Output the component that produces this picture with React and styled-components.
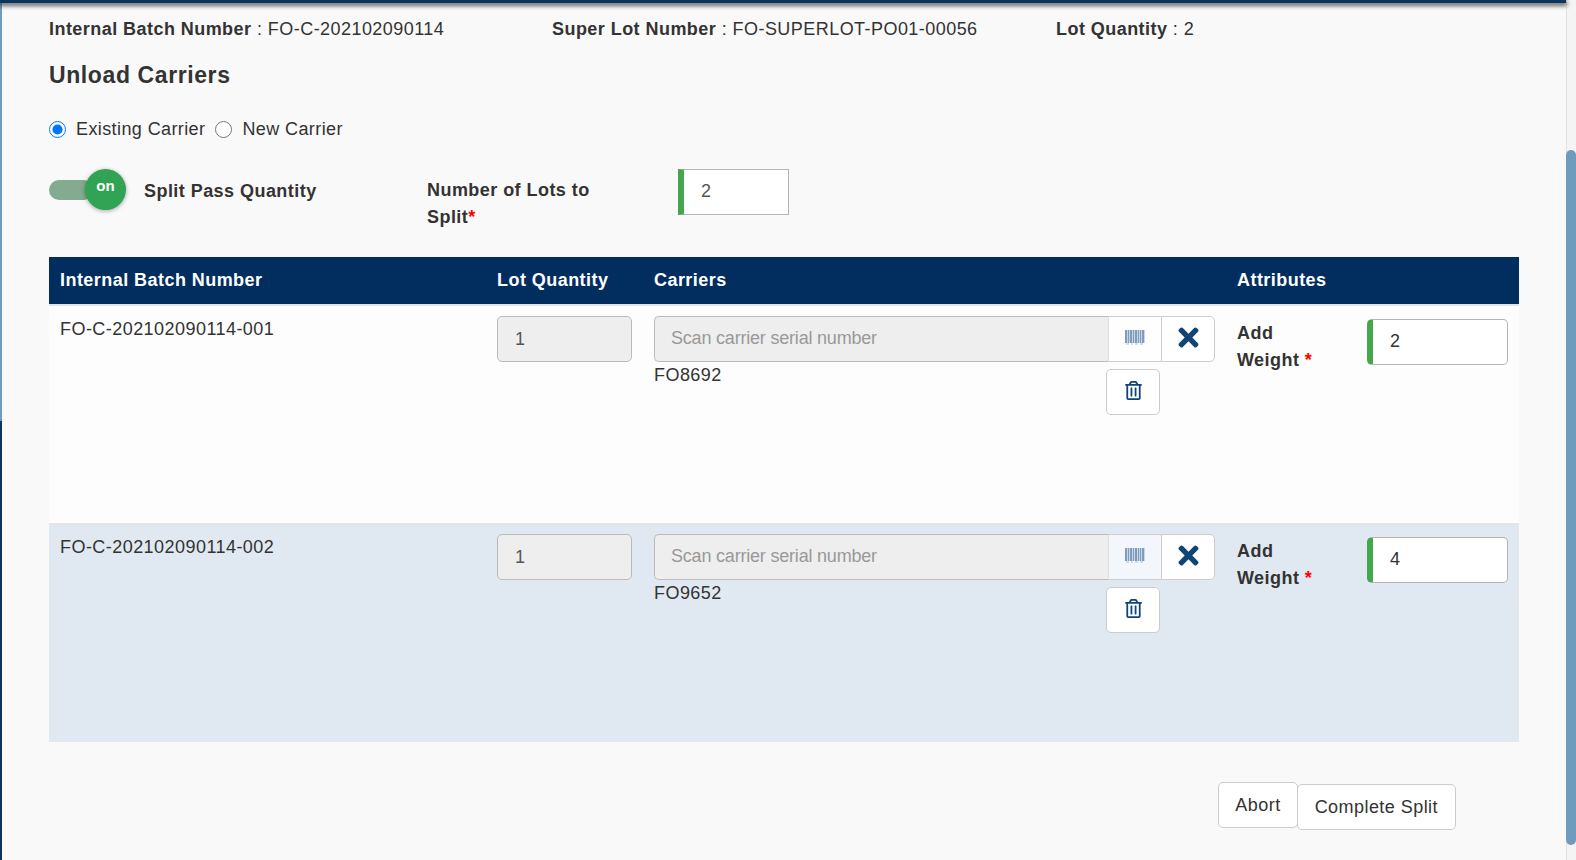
import React from 'react';
import styled, { createGlobalStyle } from 'styled-components';
import { FaTimes, FaRegTrashAlt } from 'react-icons/fa';

const GlobalStyle = createGlobalStyle`
  html, body {
    margin: 0;
    padding: 0;
    height: 860px;
    overflow: hidden;
    background: #f9f9f9;
    font-family: "Liberation Sans", Arial, sans-serif;
    font-size: 18px;
    letter-spacing: 0.45px;
    color: #333;
  }
  * { box-sizing: border-box; }
`;

const Frame = styled.div`
  display: grid;
  grid-template-columns: 2px 1fr 10px;
  grid-template-rows: 3px 1fr;
  height: 860px;
`;

const TopBar = styled.div`
  grid-column: 1 / 3;
  background: #0b3560;
  box-shadow: 0 2px 4px 1px rgba(0, 0, 0, 0.6);
  z-index: 1;
`;

const ScrollTrack = styled.div`
  grid-column: 3;
  grid-row: 1 / 3;
  background: #f4f4f4;
  border-left: 1px solid #e2e2e2;
  padding-top: 150px;
`;

const ScrollThumb = styled.div`
  height: 695px;
  margin-left: -1px;
  background: #6f9bbd;
  border-radius: 5px;
`;

const EdgeStrip = styled.div`
  background: linear-gradient(#6f9bbd 0, #6f9bbd 418px, #0b3560 418px);
`;

const Main = styled.main`
  padding: 12px 47px 0;
`;

const InfoRow = styled.div`
  display: grid;
  grid-template-columns: 503px 504px auto;
  line-height: 28px;
`;

const Heading = styled.h2`
  margin: 17px 0 0;
  font-size: 23px;
  letter-spacing: 0.6px;
  line-height: 30px;
  font-weight: 700;
`;

const RadioRow = styled.div`
  display: flex;
  align-items: center;
  margin-top: 25px;
  height: 28px;
`;

const RadioLabel = styled.label`
  display: flex;
  align-items: center;
  gap: 10px;
  margin-right: 10px;
  letter-spacing: 0.4px;
`;

const Radio = styled.input`
  width: 17px;
  height: 17px;
  margin: 0;
`;

const SplitRow = styled.div`
  display: flex;
  align-items: flex-start;
  margin-top: 26px;
  height: 88px;
`;

const Toggle = styled.div`
  position: relative;
  flex: none;
  width: 95px;
  height: 41px;
`;

const ToggleTrack = styled.div`
  width: 45px;
  height: 20px;
  margin-top: 11px;
  background: #82ab90;
  border-radius: 10px;
`;

const ToggleKnob = styled.div`
  position: absolute;
  left: 36px;
  top: 0;
  width: 41px;
  height: 41px;
  border-radius: 50%;
  background: #31a354;
  box-shadow: 0 1px 4px rgba(0, 0, 0, 0.35);
  color: #fff;
  font-size: 15px;
  font-weight: 700;
  letter-spacing: 0;
  line-height: 34px;
  text-align: center;
`;

const SplitLabel = styled.b`
  width: 283px;
  margin-top: 8px;
  line-height: 28px;
`;

const LotsLabel = styled.b`
  width: 251px;
  margin-top: 8px;
  line-height: 27px;
`;

const Required = styled.span`
  color: #f00;
  font-weight: 700;
`;

const GreenInput = styled.div`
  width: ${(p) => p.$width}px;
  height: 46px;
  padding-left: 17px;
  background: #fff;
  border: 1.5px solid #b4b4b4;
  border-left: 6px solid #43a84b;
  border-radius: ${(p) => p.$radius}px;
  color: ${(p) => p.$color || '#333'};
  line-height: 43px;
`;

const TableHead = styled.div`
  display: grid;
  grid-template-columns: 438px 157px 583px 292px;
  height: 47px;
  background: #012e5f;
  color: #fff;
  font-weight: 700;
  line-height: 46px;
`;

const HeadCell = styled.div`
  padding-left: 10px;

  &:first-child {
    padding-left: 11px;
  }
`;

const Row = styled.div`
  display: grid;
  grid-template-columns: 438px 157px 583px 292px;
  height: ${(p) => p.$height}px;
  padding-top: ${(p) => (p.$alt ? 9 : 10)}px;
  background: ${(p) => (p.$alt ? '#e0e9f2' : '#fdfdfd')};
  border-top: 2px solid #e4e4e4;
`;

const Cell = styled.div`
  padding: 0 10px;

  &:first-child {
    padding-left: 11px;
  }
`;

const BatchText = styled.div`
  line-height: 26px;
`;

const QtyField = styled.div`
  width: 135px;
  height: 46px;
  padding-left: 17px;
  background: #eee;
  border: 1px solid #bbb;
  border-radius: 5px;
  color: #555;
  line-height: 44px;
`;

const ScanGroup = styled.div`
  display: flex;
  height: 46px;
  width: 561px;
`;

const ScanField = styled.div`
  flex: 1;
  padding-left: 16px;
  background: #eee;
  border: 1px solid #bbb;
  border-right-color: #ddd;
  border-radius: 5px 0 0 5px;
  color: #999;
  letter-spacing: -0.2px;
  line-height: 42px;
`;

const BarcodeCell = styled.div`
  display: flex;
  align-items: center;
  justify-content: center;
  width: 52px;
  padding-bottom: 4px;
  background: rgba(255, 255, 255, 0.6);
  border-top: 1px solid #ccc;
  border-bottom: 1px solid #ccc;
`;

const ClearCell = styled.div`
  display: flex;
  align-items: center;
  justify-content: center;
  width: 54px;
  padding-bottom: 4px;
  background: #fff;
  border: 1px solid #ccc;
  border-radius: 0 5px 5px 0;
  color: #0f4475;
  font-size: 29px;
`;

const SerialRow = styled.div`
  display: flex;
  justify-content: space-between;
  width: 561px;
  padding-right: 55px;
  line-height: 26px;
`;

const TrashButton = styled.div`
  display: flex;
  align-items: center;
  justify-content: center;
  width: 54px;
  height: 46px;
  margin-top: 7px;
  padding-bottom: 4px;
  background: #fff;
  border: 1px solid #ccc;
  border-radius: 5px;
  color: #0f4475;
  font-size: 19px;
`;

const AttrCell = styled.div`
  display: grid;
  grid-template-columns: 130px auto;
  padding: 3px 10px 0;
`;

const AttrLabel = styled.b`
  line-height: 27px;
  margin-top: 1px;
`;

const Actions = styled.div`
  display: flex;
  align-items: flex-start;
  justify-content: flex-end;
  margin-top: 40px;
  padding-right: 63px;
`;

const ActionButton = styled.button`
  height: 46px;
  margin-top: ${(p) => p.$offset || 0}px;
  margin-left: -1px;
  padding: 0 ${(p) => p.$pad}px;
  background: #fff;
  border: 1px solid #ccc;
  border-radius: 5px;
  font: inherit;
  letter-spacing: inherit;
  color: #333;
`;

const BarcodeIcon = () => (
  <svg width="20" height="15" viewBox="0 0 20 15" fill="#7f9cbc">
    <rect width="20" height="13" fill="#c9d6e5" />
    <rect x="0" y="0" width="2" height="13" />
    <rect x="3" y="0" width="1" height="13" />
    <rect x="5" y="0" width="2" height="13" />
    <rect x="8" y="0" width="1" height="13" />
    <rect x="10" y="0" width="2" height="13" />
    <rect x="13" y="0" width="1" height="13" />
    <rect x="15" y="0" width="1" height="13" />
    <rect x="17" y="0" width="2" height="13" />
    <path d="M1 14h3M6 14h2M10 14h3M15 14h3" stroke="#a9bdd4" strokeWidth="1" />
  </svg>
);

const rows = [
  { batch: 'FO-C-202102090114-001', serial: 'FO8692', weight: '2', height: 219 },
  { batch: 'FO-C-202102090114-002', serial: 'FO9652', weight: '4', height: 219, alt: true },
];

export default function App() {
  return (
    <>
      <GlobalStyle />
      <Frame>
        <TopBar />
        <ScrollTrack>
          <ScrollThumb />
        </ScrollTrack>
        <EdgeStrip />
        <Main>
          <InfoRow>
            <div><b>Internal Batch Number</b> : FO-C-202102090114</div>
            <div><b>Super Lot Number</b> : FO-SUPERLOT-PO01-00056</div>
            <div><b>Lot Quantity</b> : 2</div>
          </InfoRow>
          <Heading>Unload Carriers</Heading>
          <RadioRow>
            <RadioLabel><Radio type="radio" name="carrier" defaultChecked />Existing Carrier</RadioLabel>
            <RadioLabel><Radio type="radio" name="carrier" />New Carrier</RadioLabel>
          </RadioRow>
          <SplitRow>
            <Toggle>
              <ToggleTrack />
              <ToggleKnob>on</ToggleKnob>
            </Toggle>
            <SplitLabel>Split Pass Quantity</SplitLabel>
            <LotsLabel>Number of Lots to<br />Split<Required>*</Required></LotsLabel>
            <GreenInput $width={111} $radius={0} $color="#555">2</GreenInput>
          </SplitRow>
          <TableHead>
            <HeadCell>Internal Batch Number</HeadCell>
            <HeadCell>Lot Quantity</HeadCell>
            <HeadCell>Carriers</HeadCell>
            <HeadCell>Attributes</HeadCell>
          </TableHead>
          {rows.map((row) => (
            <Row key={row.batch} $alt={row.alt} $height={row.height}>
              <Cell><BatchText>{row.batch}</BatchText></Cell>
              <Cell><QtyField>1</QtyField></Cell>
              <Cell>
                <ScanGroup>
                  <ScanField>Scan carrier serial number</ScanField>
                  <BarcodeCell><BarcodeIcon /></BarcodeCell>
                  <ClearCell><FaTimes /></ClearCell>
                </ScanGroup>
                <SerialRow>
                  <span>{row.serial}</span>
                  <TrashButton><FaRegTrashAlt /></TrashButton>
                </SerialRow>
              </Cell>
              <AttrCell>
                <AttrLabel>Add<br />Weight <Required>*</Required></AttrLabel>
                <GreenInput $width={141} $radius={5}>{row.weight}</GreenInput>
              </AttrCell>
            </Row>
          ))}
          <Actions>
            <ActionButton $pad={16}>Abort</ActionButton>
            <ActionButton $pad={17} $offset={2}>Complete Split</ActionButton>
          </Actions>
        </Main>
      </Frame>
    </>
  );
}
